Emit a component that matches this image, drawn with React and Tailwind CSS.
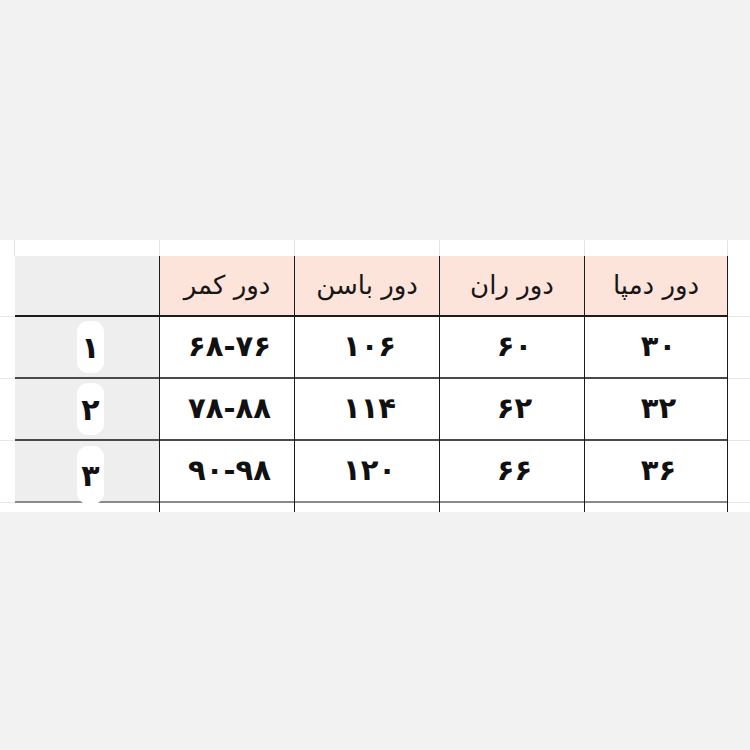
const rows = [
  { n: "۱", kamar: "۶۸-۷۶", basen: "۱۰۶", ran: "۶۰", dampa: "۳۰" },
  { n: "۲", kamar: "۷۸-۸۸", basen: "۱۱۴", ran: "۶۲", dampa: "۳۲" },
  { n: "۳", kamar: "۹۰-۹۸", basen: "۱۲۰", ran: "۶۶", dampa: "۳۶" },
];

const headers = ["دور کمر", "دور باسن", "دور ران", "دور دمپا"];
const dataWidths = ["w-[135px]", "w-[145px]", "w-[145px]", "w-[143px]"];

export default function App() {
  return (
    <div
      className="w-[750px] h-[750px] bg-[#f2f2f2] pt-[240px]"
      style={{ fontFamily: '"DejaVu Sans", "Noto Sans", sans-serif' }}
    >
      <div className="bg-white h-[272px] flex flex-col">
        {/* blank spreadsheet row on top */}
        <div className="flex h-[16px]">
          <div className="w-[15px] border-r border-[#e4e4e4]"></div>
          <div className="w-[145px] border-r border-[#e4e4e4]"></div>
          {dataWidths.map((w, i) => (
            <div key={i} className={`${w} border-r border-[#e4e4e4]`}></div>
          ))}
          <div className="w-[22px]"></div>
        </div>

        {/* header */}
        <div className="flex h-[61px]">
          <div className="w-[15px] border-b border-[#e6e6e6]"></div>
          <div className="w-[145px] bg-[#eeeeee] border-r border-b-2 border-[#1c1c1c]"></div>
          {headers.map((h, i) => (
            <div
              key={i}
              className={`${dataWidths[i]} bg-[#fde4da] border-r border-b-2 border-[#1c1c1c] flex items-center justify-center text-[26px] text-[#161616]`}
              dir="rtl"
            >
              {h}
            </div>
          ))}
          <div className="w-[22px] border-b border-[#e6e6e6]"></div>
        </div>

        {/* body */}
        {rows.map((r, idx) => {
          const last = idx === rows.length - 1;
          const line = last ? "border-[#8a8a8a]" : "border-[#4a4a4a]";
          const cells = [r.kamar, r.basen, r.ran, r.dampa];
          return (
            <div key={idx} className="flex h-[62px]">
              <div className="w-[15px] border-b border-[#e6e6e6]"></div>
              <div
                className={`w-[145px] bg-[#eeeeee] border-b-2 ${line} flex items-center justify-center relative`}
              >
                <div
                  className={`ml-[6px] w-[27px] rounded-[11px] bg-white flex items-center justify-center text-[30px] font-bold text-[#111] ${
                    last ? "h-[58px] translate-y-[4px]" : "h-[52px]"
                  }`}
                >
                  {r.n}
                </div>
                <div className="absolute right-0 top-0 bottom-[-2px] w-px bg-[#1c1c1c]"></div>
              </div>
              {cells.map((c, i) => (
                <div
                  key={i}
                  className={`${dataWidths[i]} bg-white border-b-2 ${line} flex items-center justify-center relative text-[29px] font-bold text-[#111]`}
                >
                  <span className="tracking-[2px] pl-[4px]">{c}</span>
                  <div className="absolute right-0 top-0 bottom-[-2px] w-px bg-[#1c1c1c]"></div>
                </div>
              ))}
              <div className="w-[22px] border-b border-[#e6e6e6]"></div>
            </div>
          );
        })}

        {/* tail below last line */}
        <div className="flex h-[9px]">
          <div className="w-[15px]"></div>
          <div className="w-[145px] border-r border-[#1c1c1c]"></div>
          {dataWidths.map((w, i) => (
            <div key={i} className={`${w} border-r border-[#1c1c1c]`}></div>
          ))}
          <div className="w-[22px]"></div>
        </div>
      </div>
    </div>
  );
}
